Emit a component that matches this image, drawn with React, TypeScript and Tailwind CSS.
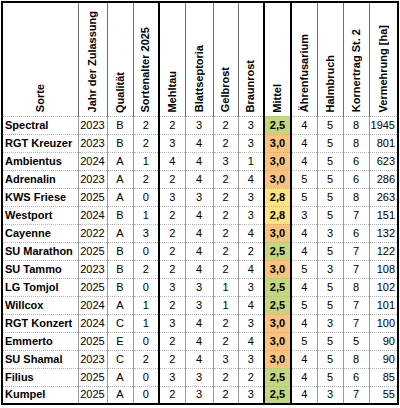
import React from "react";

type Row = {
  sorte: string;
  jahr: string;
  qual: string;
  alter: string;
  mehltau: string;
  blatt: string;
  gelb: string;
  braun: string;
  mittel: string;
  aehren: string;
  halm: string;
  korn: string;
  verm: string;
};

const rows: Row[] = [
  { sorte: "Spectral", jahr: "2023", qual: "B", alter: "2", mehltau: "2", blatt: "3", gelb: "2", braun: "3", mittel: "2,5", aehren: "4", halm: "5", korn: "8", verm: "1945" },
  { sorte: "RGT Kreuzer", jahr: "2023", qual: "B", alter: "2", mehltau: "3", blatt: "4", gelb: "2", braun: "3", mittel: "3,0", aehren: "4", halm: "5", korn: "8", verm: "801" },
  { sorte: "Ambientus", jahr: "2024", qual: "A", alter: "1", mehltau: "4", blatt: "4", gelb: "3", braun: "1", mittel: "3,0", aehren: "4", halm: "5", korn: "6", verm: "623" },
  { sorte: "Adrenalin", jahr: "2023", qual: "A", alter: "2", mehltau: "2", blatt: "4", gelb: "2", braun: "4", mittel: "3,0", aehren: "5", halm: "5", korn: "6", verm: "286" },
  { sorte: "KWS Friese", jahr: "2025", qual: "A", alter: "0", mehltau: "3", blatt: "3", gelb: "2", braun: "3", mittel: "2,8", aehren: "5", halm: "5", korn: "8", verm: "263" },
  { sorte: "Westport", jahr: "2024", qual: "B", alter: "1", mehltau: "2", blatt: "4", gelb: "2", braun: "3", mittel: "2,8", aehren: "3", halm: "5", korn: "7", verm: "151" },
  { sorte: "Cayenne", jahr: "2022", qual: "A", alter: "3", mehltau: "2", blatt: "4", gelb: "2", braun: "4", mittel: "3,0", aehren: "4", halm: "3", korn: "6", verm: "132" },
  { sorte: "SU Marathon", jahr: "2025", qual: "B", alter: "0", mehltau: "2", blatt: "4", gelb: "2", braun: "2", mittel: "2,5", aehren: "4", halm: "5", korn: "7", verm: "122" },
  { sorte: "SU Tammo", jahr: "2023", qual: "B", alter: "2", mehltau: "2", blatt: "4", gelb: "2", braun: "4", mittel: "3,0", aehren: "5", halm: "3", korn: "7", verm: "108" },
  { sorte: "LG Tomjol", jahr: "2025", qual: "B", alter: "0", mehltau: "3", blatt: "3", gelb: "1", braun: "3", mittel: "2,5", aehren: "4", halm: "5", korn: "8", verm: "102" },
  { sorte: "Willcox", jahr: "2024", qual: "A", alter: "1", mehltau: "2", blatt: "3", gelb: "1", braun: "4", mittel: "2,5", aehren: "5", halm: "5", korn: "7", verm: "101" },
  { sorte: "RGT Konzert", jahr: "2024", qual: "C", alter: "1", mehltau: "3", blatt: "4", gelb: "2", braun: "3", mittel: "3,0", aehren: "4", halm: "3", korn: "7", verm: "100" },
  { sorte: "Emmerto", jahr: "2025", qual: "E", alter: "0", mehltau: "2", blatt: "4", gelb: "2", braun: "4", mittel: "3,0", aehren: "5", halm: "5", korn: "5", verm: "90" },
  { sorte: "SU Shamal", jahr: "2023", qual: "C", alter: "2", mehltau: "2", blatt: "4", gelb: "3", braun: "3", mittel: "3,0", aehren: "4", halm: "5", korn: "8", verm: "90" },
  { sorte: "Filius", jahr: "2025", qual: "A", alter: "0", mehltau: "3", blatt: "3", gelb: "2", braun: "2", mittel: "2,5", aehren: "4", halm: "5", korn: "6", verm: "85" },
  { sorte: "Kumpel", jahr: "2025", qual: "A", alter: "0", mehltau: "2", blatt: "3", gelb: "2", braun: "3", mittel: "2,5", aehren: "4", halm: "3", korn: "7", verm: "55" },
];

const widths = [76, 29, 26, 26, 26, 28, 25, 26, 27, 26, 26, 26, 29];

// mittel colour like the excel conditional format
function mittelBg(v: string) {
  if (v === "2,5") return "bg-[#c4d67f]";
  if (v === "2,8") return "bg-[#fde382]";
  return "bg-[#f9c37f]";
}

const cell =
  "h-[18px] p-0 border border-[#9a9a9a] [border-top-color:#b4b4b4] [border-bottom-color:#b4b4b4] [border-top-style:dotted] [border-bottom-style:dotted] align-middle";
const thickLeft = "border-l-2 [border-left-color:#000] [border-left-style:solid]";
const thickRight = "border-r-2 [border-right-color:#000] [border-right-style:solid]";

function HeadCell({ label, extra = "" }: { label: string; extra?: string }) {
  return (
    <th className={`h-[114px] p-0 border border-[#6e6e6e] [border-bottom-color:#b4b4b4] [border-bottom-style:dotted] align-bottom ${extra}`}>
      <div className="flex justify-center items-end pb-[3px]">
        <span className="[writing-mode:vertical-rl] rotate-180 whitespace-nowrap text-[11px] leading-[13px] font-bold">
          {label}
        </span>
      </div>
    </th>
  );
}

function App() {
  return (
    <div className="w-[400px] h-[408px] bg-white pt-[1px] pl-[1px] font-['Liberation_Sans',Arial,sans-serif] text-black">
      <table className="table-fixed border-collapse border-2 border-black w-[397px]">
        <colgroup>
          {widths.map((w, i) => (
            <col key={i} style={{ width: w }} />
          ))}
        </colgroup>
        <thead>
          <tr>
            <HeadCell label="Sorte" />
            <HeadCell label="Jahr der Zulassung" />
            <HeadCell label="Qualität" />
            <HeadCell label="Sortenalter 2025" extra={thickRight} />
            <HeadCell label="Mehltau" />
            <HeadCell label="Blattseptoria" />
            <HeadCell label="Gelbrost" />
            <HeadCell label="Braunrost" extra={thickRight} />
            <HeadCell label="Mittel" extra={thickRight} />
            <HeadCell label="Ährenfusarium" />
            <HeadCell label="Halmbruch" />
            <HeadCell label="Kornertrag St. 2" />
            <HeadCell label="Vermehrung [ha]" />
          </tr>
        </thead>
        <tbody className="text-[11px] leading-[13px]">
          {rows.map((r) => (
            <tr key={r.sorte}>
              <td className={`${cell} pl-[2px] font-bold whitespace-nowrap`}>{r.sorte}</td>
              <td className={`${cell} text-center`}>{r.jahr}</td>
              <td className={`${cell} text-center`}>{r.qual}</td>
              <td className={`${cell} text-center ${thickRight}`}>{r.alter}</td>
              <td className={`${cell} text-center`}>{r.mehltau}</td>
              <td className={`${cell} text-center`}>{r.blatt}</td>
              <td className={`${cell} text-center`}>{r.gelb}</td>
              <td className={`${cell} text-center ${thickRight}`}>{r.braun}</td>
              <td className={`${cell} text-center font-bold ${mittelBg(r.mittel)} ${thickRight}`}>{r.mittel}</td>
              <td className={`${cell} text-center`}>{r.aehren}</td>
              <td className={`${cell} text-center`}>{r.halm}</td>
              <td className={`${cell} text-center`}>{r.korn}</td>
              <td className={`${cell} text-right pr-[2px]`}>{r.verm}</td>
            </tr>
          ))}
        </tbody>
      </table>
    </div>
  );
}

export default App;
